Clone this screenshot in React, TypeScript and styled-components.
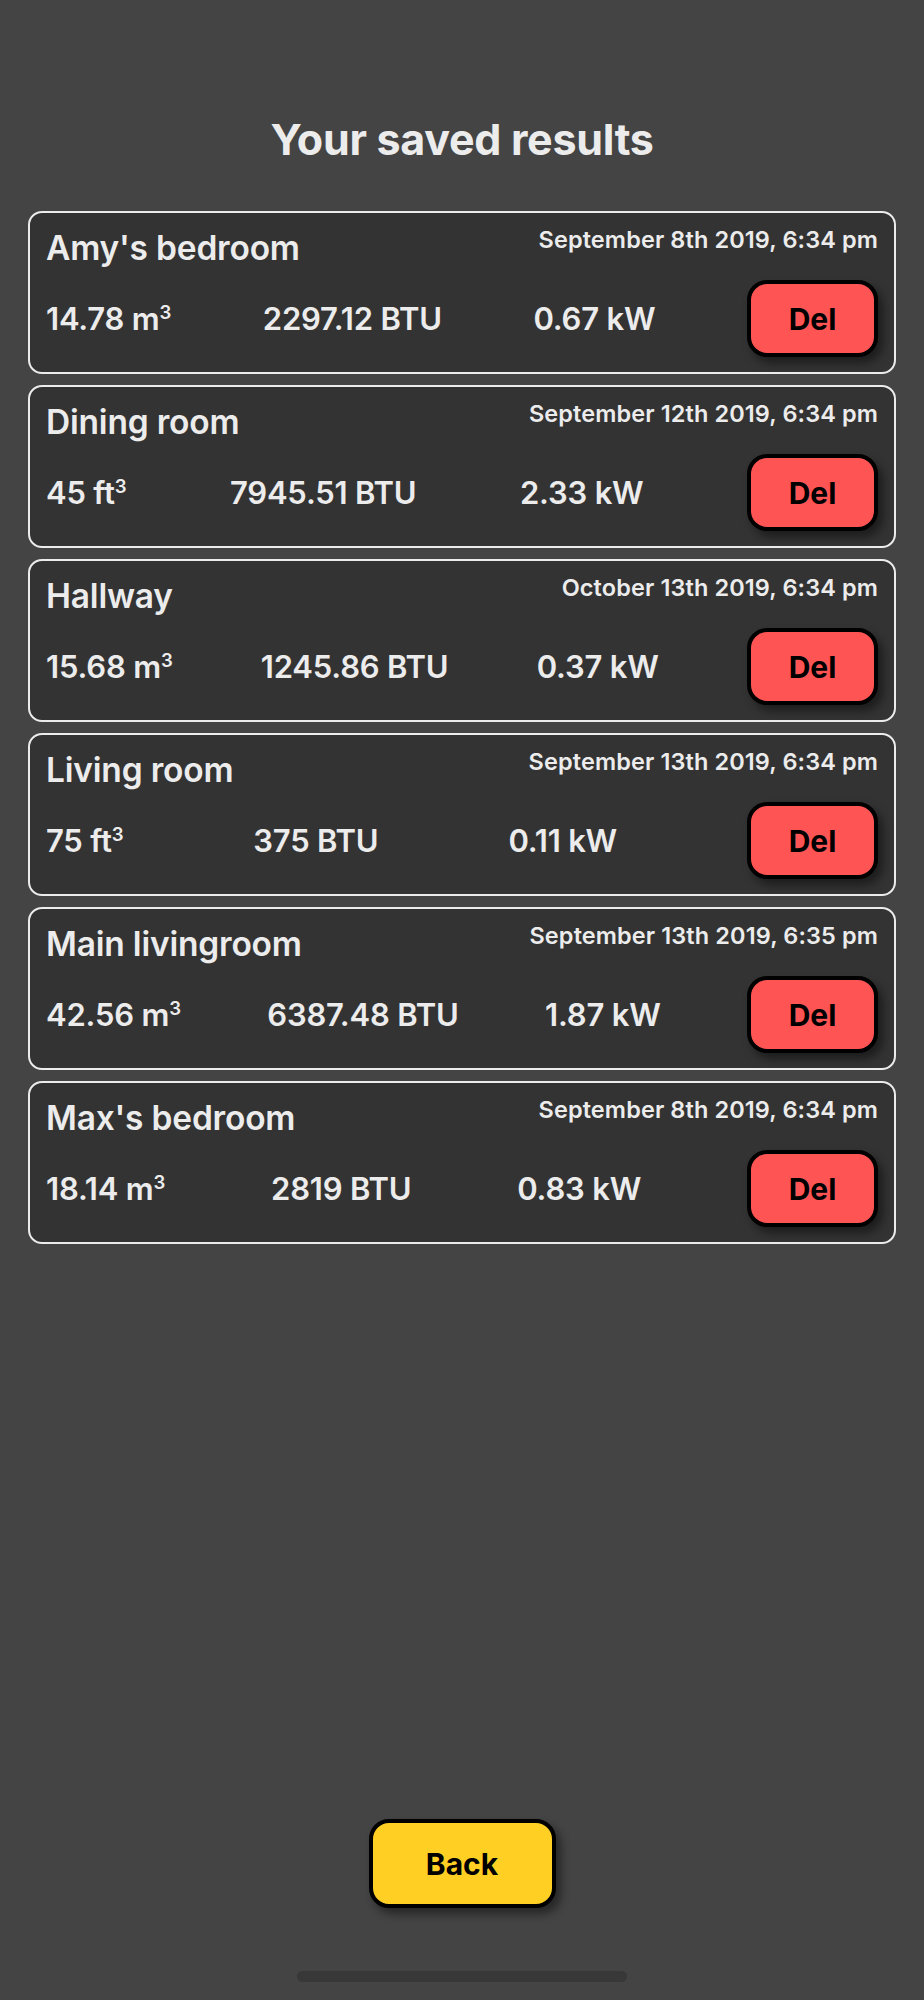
import styled, { createGlobalStyle } from 'styled-components';

const GlobalStyle = createGlobalStyle`
  html, body {
    margin: 0;
    padding: 0;
    background: #444444;
  }
  body {
    font-family: Inter, "Noto Sans", sans-serif;
    color: #ececec;
  }
`;

type SavedResult = {
  id: number;
  name: string;
  date: string;
  volume: string;
  btu: string;
  kw: string;
};

const results: SavedResult[] = [
  { id: 1, name: "Amy's bedroom", date: 'September 8th 2019, 6:34 pm', volume: '14.78 m³', btu: '2297.12 BTU', kw: '0.67 kW' },
  { id: 2, name: 'Dining room', date: 'September 12th 2019, 6:34 pm', volume: '45 ft³', btu: '7945.51 BTU', kw: '2.33 kW' },
  { id: 3, name: 'Hallway', date: 'October 13th 2019, 6:34 pm', volume: '15.68 m³', btu: '1245.86 BTU', kw: '0.37 kW' },
  { id: 4, name: 'Living room', date: 'September 13th 2019, 6:34 pm', volume: '75 ft³', btu: '375 BTU', kw: '0.11 kW' },
  { id: 5, name: 'Main livingroom', date: 'September 13th 2019, 6:35 pm', volume: '42.56 m³', btu: '6387.48 BTU', kw: '1.87 kW' },
  { id: 6, name: "Max's bedroom", date: 'September 8th 2019, 6:34 pm', volume: '18.14 m³', btu: '2819 BTU', kw: '0.83 kW' },
];

// Layout
const Screen = styled.div`
  min-height: 2000px;
  box-sizing: border-box;
  display: flex;
  flex-direction: column;
  align-items: center;
  padding: 114px 28px 18px;
`;

const Title = styled.h1`
  margin: 0 0 47px;
  font-size: 43px;
  line-height: 50px;
  font-weight: 700;
  letter-spacing: -0.3px;
  color: #ececec;
`;

const List = styled.div`
  width: 100%;
  display: flex;
  flex-direction: column;
  gap: 11px;
`;

const Card = styled.div`
  box-sizing: border-box;
  height: 163px;
  background: #333333;
  border: 2px solid #ececec;
  border-radius: 14px;
  padding: 16px 16px 15px;
  display: flex;
  flex-direction: column;
  justify-content: space-between;
`;

const CardHeader = styled.div`
  display: flex;
  justify-content: space-between;
  align-items: flex-start;
`;

const RoomName = styled.div`
  font-size: 33.5px;
  line-height: 38px;
  font-weight: 600;
  letter-spacing: -0.2px;
`;

const DateText = styled.div`
  font-size: 23.5px;
  line-height: 22px;
  font-weight: 600;
  letter-spacing: 0.1px;
`;

const ValuesRow = styled.div`
  display: flex;
  justify-content: space-between;
  align-items: center;
`;

const Value = styled.span`
  font-size: 31px;
  font-weight: 600;
  letter-spacing: -0.2px;
  sup {
    font-size: 0.6em;
    vertical-align: 0.6em;
    line-height: 0;
  }
`;

const ActionButton = styled.button<{ $bg: string; $w: number; $h: number }>`
  box-sizing: border-box;
  width: ${p => p.$w}px;
  height: ${p => p.$h}px;
  background: ${p => p.$bg};
  border: 4px solid #000;
  border-radius: 20px;
  box-shadow: 5px 6px 10px rgba(0, 0, 0, 0.45);
  font-family: Inter, "Noto Sans", sans-serif;
  font-size: 30px;
  font-weight: 700;
  color: #000;
  padding: 0;
  cursor: pointer;
`;

const Spacer = styled.div`
  flex: 1;
`;

const HomeIndicator = styled.div`
  margin-top: 63px;
  width: 330px;
  height: 11px;
  border-radius: 6px;
  background: #383838;
`;

// Splits "14.78 m³" so the cube mark sits as a superscript
function VolumeText({ text }: { text: string }) {
  if (text.endsWith('³')) {
    return <Value>{text.slice(0, -1)}<sup>3</sup></Value>;
  }
  return <Value>{text}</Value>;
}

export default function App() {
  return (
    <>
      <GlobalStyle />
      <Screen>
        <Title>Your saved results</Title>
        <List>
          {results.map(r => (
            <Card key={r.id}>
              <CardHeader>
                <RoomName>{r.name}</RoomName>
                <DateText>{r.date}</DateText>
              </CardHeader>
              <ValuesRow>
                <VolumeText text={r.volume} />
                <Value>{r.btu}</Value>
                <Value>{r.kw}</Value>
                <ActionButton $bg="#ff5454" $w={131} $h={77}>Del</ActionButton>
              </ValuesRow>
            </Card>
          ))}
        </List>
        <Spacer />
        <ActionButton $bg="#ffcf24" $w={187} $h={89}>Back</ActionButton>
        <HomeIndicator />
      </Screen>
    </>
  );
}
